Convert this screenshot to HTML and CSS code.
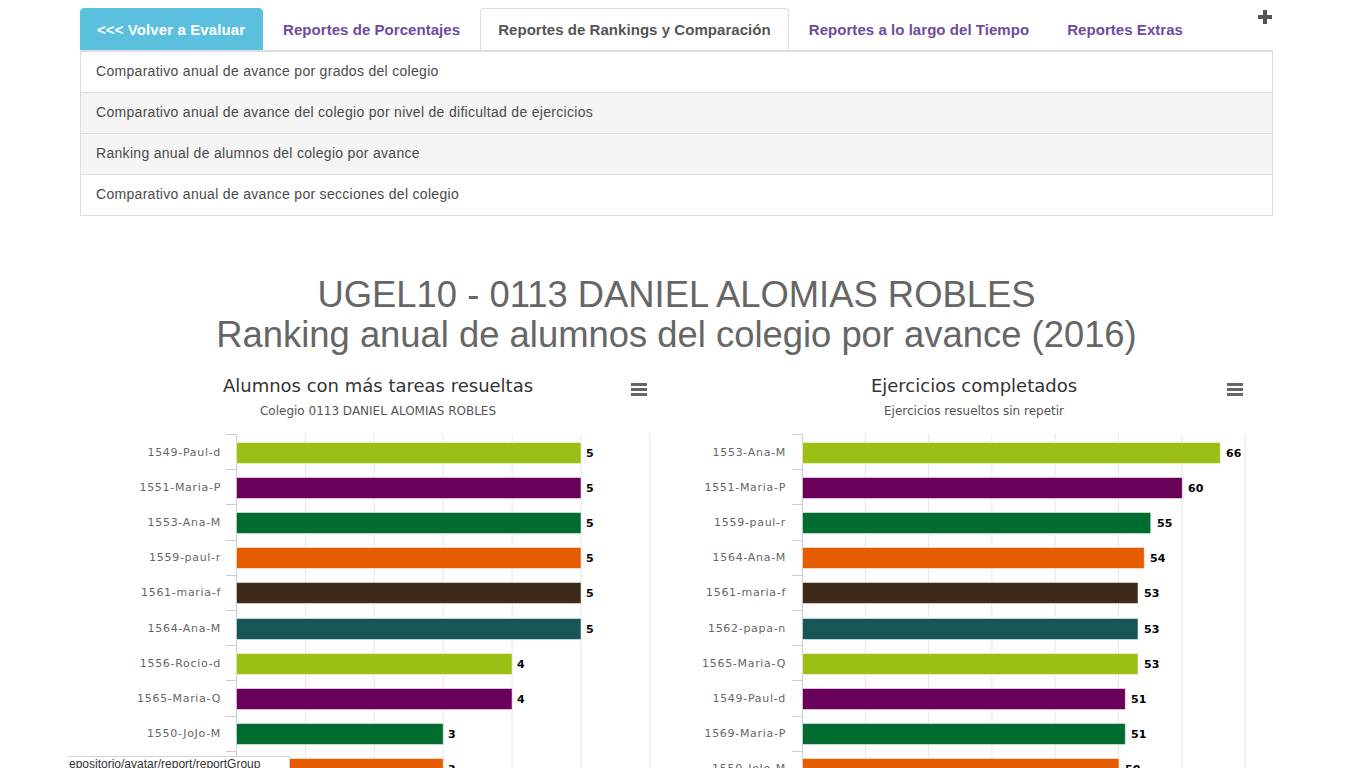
FILE: index.html
```html
<!DOCTYPE html>
<html lang="es">
<head>
<meta charset="utf-8">
<title>Ranking anual de alumnos</title>
<link rel="stylesheet" href="styles.css">
</head>
<body>
<div class="page">
  <nav class="tabs">
    <a class="tab tab-back" href="#">&lt;&lt;&lt; Volver a Evaluar</a>
    <a class="tab" href="#">Reportes de Porcentajes</a>
    <a class="tab tab-active" href="#">Reportes de Rankings y Comparación</a>
    <a class="tab" href="#">Reportes a lo largo del Tiempo</a>
    <a class="tab" href="#">Reportes Extras</a>
    <svg class="plus" width="14" height="14" viewBox="0 0 14 14"><rect x="5" y="0" width="4" height="14" fill="#555"/><rect x="0" y="5" width="14" height="4" fill="#555"/></svg>
  </nav>
  <div class="list">
    <div class="item">Comparativo anual de avance por grados del colegio</div>
    <div class="item item-grey">Comparativo anual de avance del colegio por nivel de dificultad de ejercicios</div>
    <div class="item item-grey">Ranking anual de alumnos del colegio por avance</div>
    <div class="item">Comparativo anual de avance por secciones del colegio</div>
  </div>

  <h1 class="report-title">UGEL10 - 0113 DANIEL ALOMIAS ROBLES<br>Ranking anual de alumnos del colegio por avance (2016)</h1>

  <div class="charts">
    <div class="chart">
      <svg width="566" height="440" viewBox="0 0 566 440" class="chart-svg">
        <text x="283" y="22" class="c-title" text-anchor="middle">Alumnos con más tareas resueltas</text>
        <text x="283" y="45" class="c-sub" text-anchor="middle">Colegio 0113 DANIEL ALOMIAS ROBLES</text>
        <g class="menu"><rect x="536" y="13" width="16" height="3"/><rect x="536" y="18" width="16" height="3"/><rect x="536" y="23" width="16" height="3"/></g>
        <g class="grid">
          <line x1="210.4" y1="64" x2="210.4" y2="440"/>
          <line x1="279.3" y1="64" x2="279.3" y2="440"/>
          <line x1="348.2" y1="64" x2="348.2" y2="440"/>
          <line x1="417.1" y1="64" x2="417.1" y2="440"/>
          <line x1="486" y1="64" x2="486" y2="440"/>
          <line x1="554.9" y1="64" x2="554.9" y2="440"/>
        </g>
        <g class="axis">
          <line x1="141.5" y1="64" x2="141.5" y2="440"/>
          <line x1="131" y1="64.5" x2="141" y2="64.5"/>
          <line x1="131" y1="99.5" x2="141" y2="99.5"/>
          <line x1="131" y1="134.5" x2="141" y2="134.5"/>
          <line x1="131" y1="170.5" x2="141" y2="170.5"/>
          <line x1="131" y1="205.5" x2="141" y2="205.5"/>
          <line x1="131" y1="240.5" x2="141" y2="240.5"/>
          <line x1="131" y1="275.5" x2="141" y2="275.5"/>
          <line x1="131" y1="310.5" x2="141" y2="310.5"/>
          <line x1="131" y1="346.5" x2="141" y2="346.5"/>
          <line x1="131" y1="381.5" x2="141" y2="381.5"/>
          <line x1="131" y1="416.5" x2="141" y2="416.5"/>
        </g>
        <g class="cat" text-anchor="end">
          <text x="126" y="86">1549-Paul-d</text>
          <text x="126" y="121">1551-Maria-P</text>
          <text x="126" y="156">1553-Ana-M</text>
          <text x="126" y="191">1559-paul-r</text>
          <text x="126" y="226">1561-maria-f</text>
          <text x="126" y="262">1564-Ana-M</text>
          <text x="126" y="297">1556-Rocio-d</text>
          <text x="126" y="332">1565-Maria-Q</text>
          <text x="126" y="367">1550-JoJo-M</text>
          <text x="126" y="402">1560-Jose-M</text>
        </g>
        <g class="bars">
          <rect x="141.5" y="72.5" width="344.5" height="21" fill="#9bbf13"/>
          <rect x="141.5" y="107.5" width="344.5" height="21" fill="#6b005b"/>
          <rect x="141.5" y="142.5" width="344.5" height="21" fill="#006c2f"/>
          <rect x="141.5" y="177.5" width="344.5" height="21" fill="#e65c00"/>
          <rect x="141.5" y="212.5" width="344.5" height="21" fill="#3e2a18"/>
          <rect x="141.5" y="248.5" width="344.5" height="21" fill="#175656"/>
          <rect x="141.5" y="283.5" width="275.6" height="21" fill="#9bbf13"/>
          <rect x="141.5" y="318.5" width="275.6" height="21" fill="#6b005b"/>
          <rect x="141.5" y="353.5" width="206.7" height="21" fill="#006c2f"/>
          <rect x="141.5" y="388.5" width="206.7" height="21" fill="#e65c00"/>
        </g>
        <g class="val">
          <text x="491" y="87">5</text>
          <text x="491" y="122">5</text>
          <text x="491" y="157">5</text>
          <text x="491" y="192">5</text>
          <text x="491" y="227">5</text>
          <text x="491" y="263">5</text>
          <text x="422" y="298">4</text>
          <text x="422" y="333">4</text>
          <text x="353" y="368">3</text>
          <text x="353" y="403">3</text>
        </g>
      </svg>
    </div>
    <div class="chart">
      <svg width="566" height="440" viewBox="0 0 566 440" class="chart-svg">
        <text x="283" y="22" class="c-title" text-anchor="middle">Ejercicios completados</text>
        <text x="283" y="45" class="c-sub" text-anchor="middle">Ejercicios resueltos sin repetir</text>
        <g class="menu"><rect x="536" y="13" width="16" height="3"/><rect x="536" y="18" width="16" height="3"/><rect x="536" y="23" width="16" height="3"/></g>
        <g class="grid">
          <line x1="174.3" y1="64" x2="174.3" y2="440"/>
          <line x1="237.6" y1="64" x2="237.6" y2="440"/>
          <line x1="300.9" y1="64" x2="300.9" y2="440"/>
          <line x1="364.2" y1="64" x2="364.2" y2="440"/>
          <line x1="427.5" y1="64" x2="427.5" y2="440"/>
          <line x1="490.8" y1="64" x2="490.8" y2="440"/>
          <line x1="554.1" y1="64" x2="554.1" y2="440"/>
        </g>
        <g class="axis">
          <line x1="111.5" y1="64" x2="111.5" y2="440"/>
          <line x1="101" y1="64.5" x2="111" y2="64.5"/>
          <line x1="101" y1="99.5" x2="111" y2="99.5"/>
          <line x1="101" y1="134.5" x2="111" y2="134.5"/>
          <line x1="101" y1="170.5" x2="111" y2="170.5"/>
          <line x1="101" y1="205.5" x2="111" y2="205.5"/>
          <line x1="101" y1="240.5" x2="111" y2="240.5"/>
          <line x1="101" y1="275.5" x2="111" y2="275.5"/>
          <line x1="101" y1="310.5" x2="111" y2="310.5"/>
          <line x1="101" y1="346.5" x2="111" y2="346.5"/>
          <line x1="101" y1="381.5" x2="111" y2="381.5"/>
          <line x1="101" y1="416.5" x2="111" y2="416.5"/>
        </g>
        <g class="cat" text-anchor="end">
          <text x="95" y="86">1553-Ana-M</text>
          <text x="95" y="121">1551-Maria-P</text>
          <text x="95" y="156">1559-paul-r</text>
          <text x="95" y="191">1564-Ana-M</text>
          <text x="95" y="226">1561-maria-f</text>
          <text x="95" y="262">1562-papa-n</text>
          <text x="95" y="297">1565-Maria-Q</text>
          <text x="95" y="332">1549-Paul-d</text>
          <text x="95" y="367">1569-Maria-P</text>
          <text x="95" y="402">1550-JoJo-M</text>
        </g>
        <g class="bars">
          <rect x="111.5" y="72.5" width="417.8" height="21" fill="#9bbf13"/>
          <rect x="111.5" y="107.5" width="379.8" height="21" fill="#6b005b"/>
          <rect x="111.5" y="142.5" width="348.2" height="21" fill="#006c2f"/>
          <rect x="111.5" y="177.5" width="341.8" height="21" fill="#e65c00"/>
          <rect x="111.5" y="212.5" width="335.5" height="21" fill="#3e2a18"/>
          <rect x="111.5" y="248.5" width="335.5" height="21" fill="#175656"/>
          <rect x="111.5" y="283.5" width="335.5" height="21" fill="#9bbf13"/>
          <rect x="111.5" y="318.5" width="322.8" height="21" fill="#6b005b"/>
          <rect x="111.5" y="353.5" width="322.8" height="21" fill="#006c2f"/>
          <rect x="111.5" y="388.5" width="316.5" height="21" fill="#e65c00"/>
        </g>
        <g class="val">
          <text x="535" y="87">66</text>
          <text x="497" y="122">60</text>
          <text x="466" y="157">55</text>
          <text x="459" y="192">54</text>
          <text x="453" y="227">53</text>
          <text x="453" y="263">53</text>
          <text x="453" y="298">53</text>
          <text x="440" y="333">51</text>
          <text x="440" y="368">51</text>
          <text x="434" y="403">50</text>
        </g>
      </svg>
    </div>
  </div>
</div>
<div class="statusbar">epositorio/avatar/report/reportGroup</div>
</body>
</html>
```

FILE: styles.css
```css
html, body {
  margin: 0;
  padding: 0;
  background: #fff;
}

body {
  font-family: "Liberation Sans", Arial, sans-serif;
  color: #333;
}

.page {
  margin-left: 80px;
  width: 1193px;
  padding-top: 8px;
}

.tabs {
  position: relative;
  display: flex;
  border-bottom: 1px solid #ddd;
  height: 42px;
}

.tab {
  display: block;
  height: 20px;
  padding: 10px 17px;
  margin-right: 2px;
  margin-bottom: -1px;
  border: 1px solid transparent;
  border-radius: 4px 4px 0 0;
  font-size: 15px;
  font-weight: bold;
  line-height: 21px;
  letter-spacing: 0.05px;
  color: #6f4b9e;
  text-decoration: none;
  white-space: nowrap;
}

.tab-back {
  padding: 10px 17px 10px 16px;
  background: #5bc0de;
  border-color: #5bc0de;
  color: #fff;
  letter-spacing: 0.1px;
}

.tab-active {
  background: #fff;
  border-color: #ddd #ddd transparent #ddd;
  color: #555;
}

.plus {
  position: absolute;
  right: 1px;
  top: 2px;
}

.list {
  display: flex;
  flex-direction: column;
}

.item {
  height: 20px;
  padding: 10px 15px;
  margin-bottom: -1px;
  border: 1px solid #ddd;
  font-size: 14px;
  line-height: 19px;
  letter-spacing: 0.3px;
  color: #4a4a4a;
  background: #fff;
}

.item-grey {
  background: #f5f5f5;
}

.report-title {
  margin: 60px 0 0;
  text-align: center;
  font-family: "Liberation Sans", Arial, sans-serif;
  font-weight: normal;
  font-size: 36.4px;
  line-height: 40px;
  color: #666;
}

.charts {
  display: flex;
  gap: 30px;
  padding: 0 15px;
  margin-top: 15px;
}

.chart {
  width: 566px;
  height: 440px;
}

.chart-svg {
  display: block;
  font-family: "DejaVu Sans", Verdana, sans-serif;
}

.c-title {
  font-size: 18px;
  fill: #333;
}

.c-sub {
  font-size: 12px;
  fill: #555;
}

.menu rect {
  fill: #666;
}

.grid line {
  stroke: #e6e6e6;
  stroke-width: 1;
}

.axis line {
  stroke: #c0d0e0;
  stroke-width: 1;
}

.cat text {
  font-size: 11px;
  fill: #666;
  letter-spacing: 0.7px;
}

.bars rect {
  stroke: #fff;
  stroke-opacity: 0.5;
  stroke-width: 1;
}

.val text {
  font-size: 11px;
  font-weight: bold;
  fill: #000;
}

.statusbar {
  position: fixed;
  left: 67px;
  bottom: -3px;
  width: 220px;
  height: 14px;
  padding-left: 2px;
  background: #fff;
  border-top: 1px solid #d4d4d4;
  border-right: 1px solid #d4d4d4;
  font-family: "Liberation Sans", Arial, sans-serif;
  font-size: 12px;
  line-height: 14px;
  color: #333;
  overflow: hidden;
  white-space: nowrap;
}
```
